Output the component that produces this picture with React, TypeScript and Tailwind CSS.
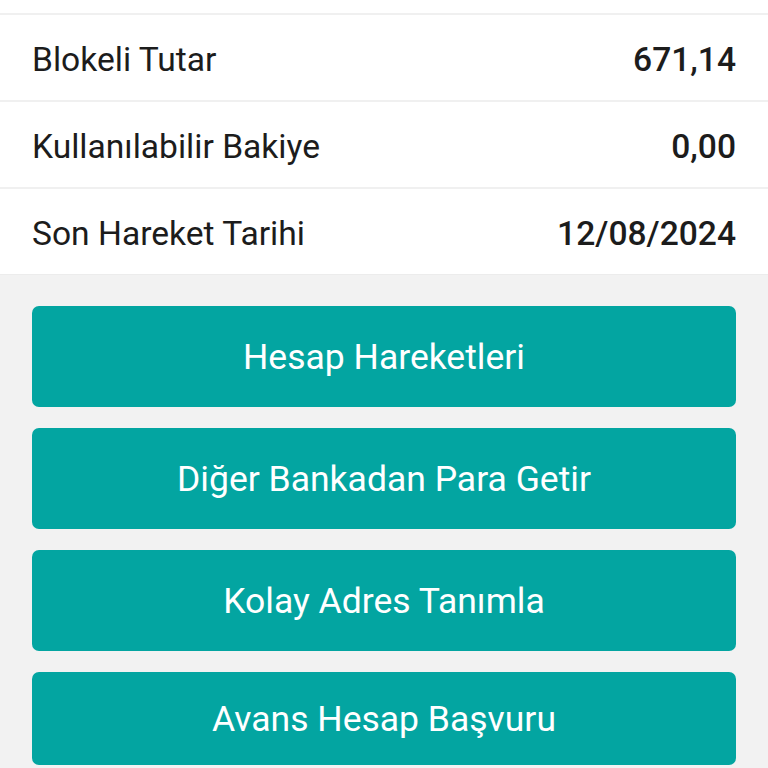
import * as React from "react";

const rows = [
  { label: "Blokeli Tutar", value: "671,14" },
  { label: "Kullanılabilir Bakiye", value: "0,00" },
  { label: "Son Hareket Tarihi", value: "12/08/2024" },
];

const actions = [
  { title: "Hesap Hareketleri", h: "h-[101px]" },
  { title: "Diğer Bankadan Para Getir", h: "h-[101px]" },
  { title: "Kolay Adres Tanımla", h: "h-[101px]" },
  { title: "Avans Hesap Başvuru", h: "h-[93px]" },
];

export default function App() {
  return (
    <div className="w-[768px] h-[768px] overflow-hidden bg-[#f2f2f2] font-['Roboto',sans-serif]">
      <div className="bg-white pt-[13px]">
        {rows.map((r) => (
          <div
            key={r.label}
            className="h-[87px] border-t-2 border-[#f0f0f0] px-8 pt-[6px] flex items-center justify-between text-[33.6px] text-[#1c1c1c]"
          >
            <span>{r.label}</span>
            <span className="font-medium">{r.value}</span>
          </div>
        ))}
      </div>
      <div className="border-t border-[#ececec] px-8 pt-[31px] flex flex-col gap-[21px]">
        {actions.map((a) => (
          <button
            key={a.title}
            className={`${a.h} w-full rounded-[7px] bg-[#03a5a1] text-white text-[35.5px] pt-[3px] flex items-center justify-center`}
          >
            {a.title}
          </button>
        ))}
      </div>
    </div>
  );
}
